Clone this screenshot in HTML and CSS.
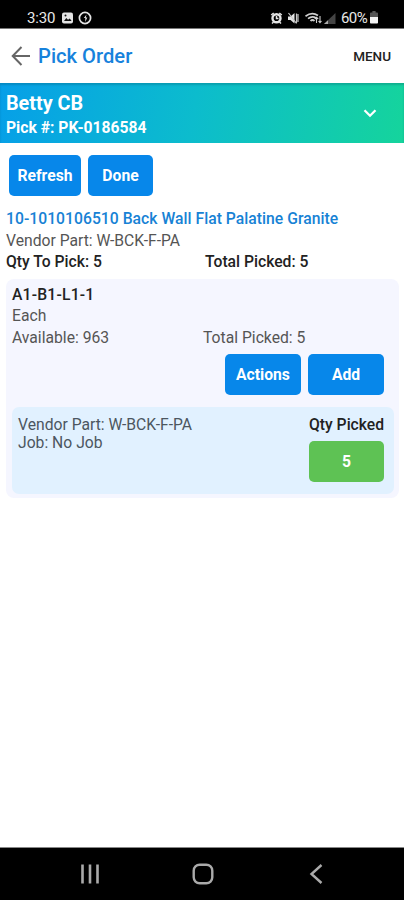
FILE: index.html
```html
<!DOCTYPE html>
<html lang="en">
<head>
<meta charset="utf-8">
<title>Pick Order</title>
<link rel="stylesheet" href="styles.css">
</head>
<body>
<div class="screen">
  <div class="status">
    <span class="time">3:30</span>
    <svg class="status-left" width="32" height="14" viewBox="0 0 32 14">
      <rect x="1" y="1.5" width="11" height="11" rx="2" fill="#e4e4e4"/>
      <path d="M3 10l2.3-3 1.7 1.8L8.800 7.500l1.800 2.500z" fill="#111"/>
      <circle cx="4.500" cy="4.500" r="1" fill="#111"/>
      <circle cx="24" cy="7" r="5.600" fill="none" stroke="#e4e4e4" stroke-width="1.700"/>
      <path d="M25.500 3.500L22.800 7h1.500v4l2-4.500h-1.500z" fill="#e4e4e4"/>
    </svg>
    <svg class="status-right" width="66" height="14" viewBox="0 0 66 14">
      <g fill="none" stroke="#e4e4e4" stroke-width="1.500">
        <circle cx="6.500" cy="7.200" r="4" stroke-width="2.400"/>
        <path d="M6.500 5v2.500h2M1.200 4l2.500-2M11.800 4L9.300 2M2 12.500l1.500-1.500M11 12.500L9.500 11"/>
      </g>
      <path d="M18 5.500h2.500L24.500 2v10.500L20.500 9H18z" fill="#e4e4e4"/>
      <path d="M18.500 2l8 10.500M26.500 2.500v9.500M28 3v8" stroke="#c8c8c8" stroke-width="1.200"/>
      <g fill="none" stroke="#cfcfcf" stroke-width="1.700">
        <path d="M35.500 5.200Q42 .5 48 4.500M38 7.700Q42 4.500 46 7M40.500 10Q42.500 8 44.500 10"/>
        <path d="M46.500 12V6.500M44.800 8l1.700-1.800L48.200 8M50 5v6.500M48.500 10l1.500 1.700 1.500-1.700" stroke-width="1.100"/>
      </g>
      <path d="M54 13L65.500 2v11z" fill="#444"/>
      <path d="M54 13l4-3.800V13z" fill="#aaa"/>
    </svg>
    <span class="percent">60%</span>
    <svg class="battery" width="8" height="13" viewBox="0 0 9 13" preserveAspectRatio="none">
      <path d="M2.700 0h3.600v1.500H8a1 1 0 0 1 1 1V6H0V2.500a1 1 0 0 1 1-1h1.700z" fill="#555"/>
      <path d="M0 6h9v5.500a1 1 0 0 1-1 1H1a1 1 0 0 1-1-1z" fill="#f4f4f4"/>
    </svg>
  </div>
  <header class="appbar">
    <svg class="back" width="20" height="20" viewBox="0 0 20 20" fill="none" stroke="#666" stroke-width="2">
      <path d="M19 10H2M10.500 1L1.700 10l8.800 9"/>
    </svg>
    <h1 class="title">Pick Order</h1>
    <span class="menu">MENU</span>
  </header>
  <section class="banner">
    <div>
      <div class="customer">Betty CB</div>
      <div class="pick">Pick #: PK-0186584</div>
    </div>
    <svg class="chevron" width="14" height="9" viewBox="0 0 14 9" fill="none" stroke="#fff" stroke-width="2.300"><path d="M1.500 1.200L7 6.700l5.500-5.500"/></svg>
  </section>
  <div class="toolbar">
    <button class="btn refresh">Refresh</button>
    <button class="btn done">Done</button>
  </div>
  <section class="item">
    <div class="item-name">10-1010106510 Back Wall Flat Palatine Granite</div>
    <div class="vendor">Vendor Part: W-BCK-F-PA</div>
    <div class="totals"><span class="qty">Qty To Pick: 5</span><span class="total">Total Picked: 5</span></div>
  </section>
  <section class="card">
    <div class="bin">A1-B1-L1-1</div>
    <div class="unit">Each</div>
    <div class="stock"><span class="available">Available: 963</span><span class="picked">Total Picked: 5</span></div>
    <div class="actions">
      <button class="btn act">Actions</button>
      <button class="btn add">Add</button>
    </div>
    <div class="line">
      <div class="line-info">
        <div class="line-part">Vendor Part: W-BCK-F-PA</div>
        <div class="job">Job: No Job</div>
      </div>
      <div class="line-qty">
        <div class="qty-label">Qty Picked</div>
        <button class="btn five">5</button>
      </div>
    </div>
  </section>
  <nav class="nav">
    <svg width="20" height="20" viewBox="0 0 20 20" stroke="#aaa" stroke-width="2.600"><path d="M2.500 .5v19M10 .5v19M17.500 .5v19"/></svg>
    <svg width="22" height="22" viewBox="0 0 22 22" fill="none" stroke="#aaa" stroke-width="2.400"><rect x="1.700" y="1.700" width="18.600" height="18.600" rx="6"/></svg>
    <svg width="14" height="20" viewBox="0 0 14 20" fill="none" stroke="#aaa" stroke-width="2.400"><path d="M12.500 1L2.500 10l10 9"/></svg>
  </nav>
</div>
</body>
</html>
```
FILE: styles.css
```css
* { box-sizing: border-box; }
body { margin: 0; font-family: Roboto, "Liberation Sans", sans-serif; background: #fff; }
svg { display: block; flex: none; }
.screen { width: 404px; height: 900px; display: flex; flex-direction: column; white-space: nowrap; overflow: hidden; }
.status { height: 28px; flex: none; background: #000; display: flex; align-items: center; padding: 7px 26px 0 27px; color: #e8e8e8; font-size: 15px; line-height: 20px; box-shadow: 0 1px 0 #777; }
.time { width: 34px; letter-spacing: -0.2px; }
.status-right { margin-left: auto; margin-right: 5px; }
.percent { width: 28px; letter-spacing: -0.6px; }
.battery { margin-left: 1px; }
.appbar { height: 55px; flex: none; display: flex; align-items: center; padding: 0 13px 0 11px; }
.title { margin: 1px 0 0 7px; font-size: 20.200px; line-height: 24px; font-weight: 500; color: #1782dc; }
.menu { margin-left: auto; font-size: 13.500px; font-weight: 500; color: #222; }
.banner { height: 60px; flex: none; display: flex; justify-content: space-between; padding: 9px 27px 0 6px; color: #fff; background: linear-gradient(100deg, #069fe8 0%, #0cbccd 48%, #15d49c 100%); box-shadow: inset 0 2px 2px rgba(0, 70, 90, .25); }
.customer { font-size: 19.800px; line-height: 24px; font-weight: 700; }
.pick { font-size: 15.700px; line-height: 23px; font-weight: 700; }
.chevron { margin-top: 17px; }
.toolbar { display: flex; gap: 7px; padding: 12px 9px 0; }
.btn { border: 0; padding: 0; margin: 0; height: 41px; border-radius: 5px; background: #0787ea; color: #fff; font: 700 15.700px/41px Roboto, "Liberation Sans", sans-serif; text-align: center; }
.refresh { width: 72px; }
.done { width: 65px; }
.item { padding: 12px 6px 0; font-size: 15.700px; line-height: 21.500px; color: #555; }
.item-name { color: #1782d5; font-weight: 500; letter-spacing: 0.03px; }
.totals, .stock { display: grid; grid-template-columns: 199px 1fr; color: #222; font-weight: 500; }
.card { margin: 6px 5px 0 6px; padding: 5px 6px 5px; height: 219px; background: #f5f6ff; border-radius: 8px; font-size: 15.700px; line-height: 21.500px; color: #555; }
.bin { color: #222; font-weight: 500; letter-spacing: 0.2px; }
.stock { grid-template-columns: 191px 1fr; color: inherit; font-weight: 400; }
.actions { display: flex; justify-content: flex-end; gap: 7px; padding: 6px 9px 0 0; }
.act, .add { width: 76px; }
.line { margin: 12px -1px 0 0; height: 87px; display: flex; justify-content: space-between; padding: 9px 10px 0 6px; border-radius: 7px; background: #e1f1ff; line-height: 18px; color: #4c5660; }
.line-qty { width: 75px; }
.qty-label { color: #222; font-weight: 500; }
.five { width: 75px; margin-top: 7px; background: #5ec254; }
.nav { margin-top: auto; height: 53px; flex: none; background: #000; border-top: 1px solid #888; display: flex; align-items: center; padding-left: 80px; }
.nav svg:nth-child(2) { margin-left: 92px; }
.nav svg:nth-child(3) { margin-left: 95px; }
```
